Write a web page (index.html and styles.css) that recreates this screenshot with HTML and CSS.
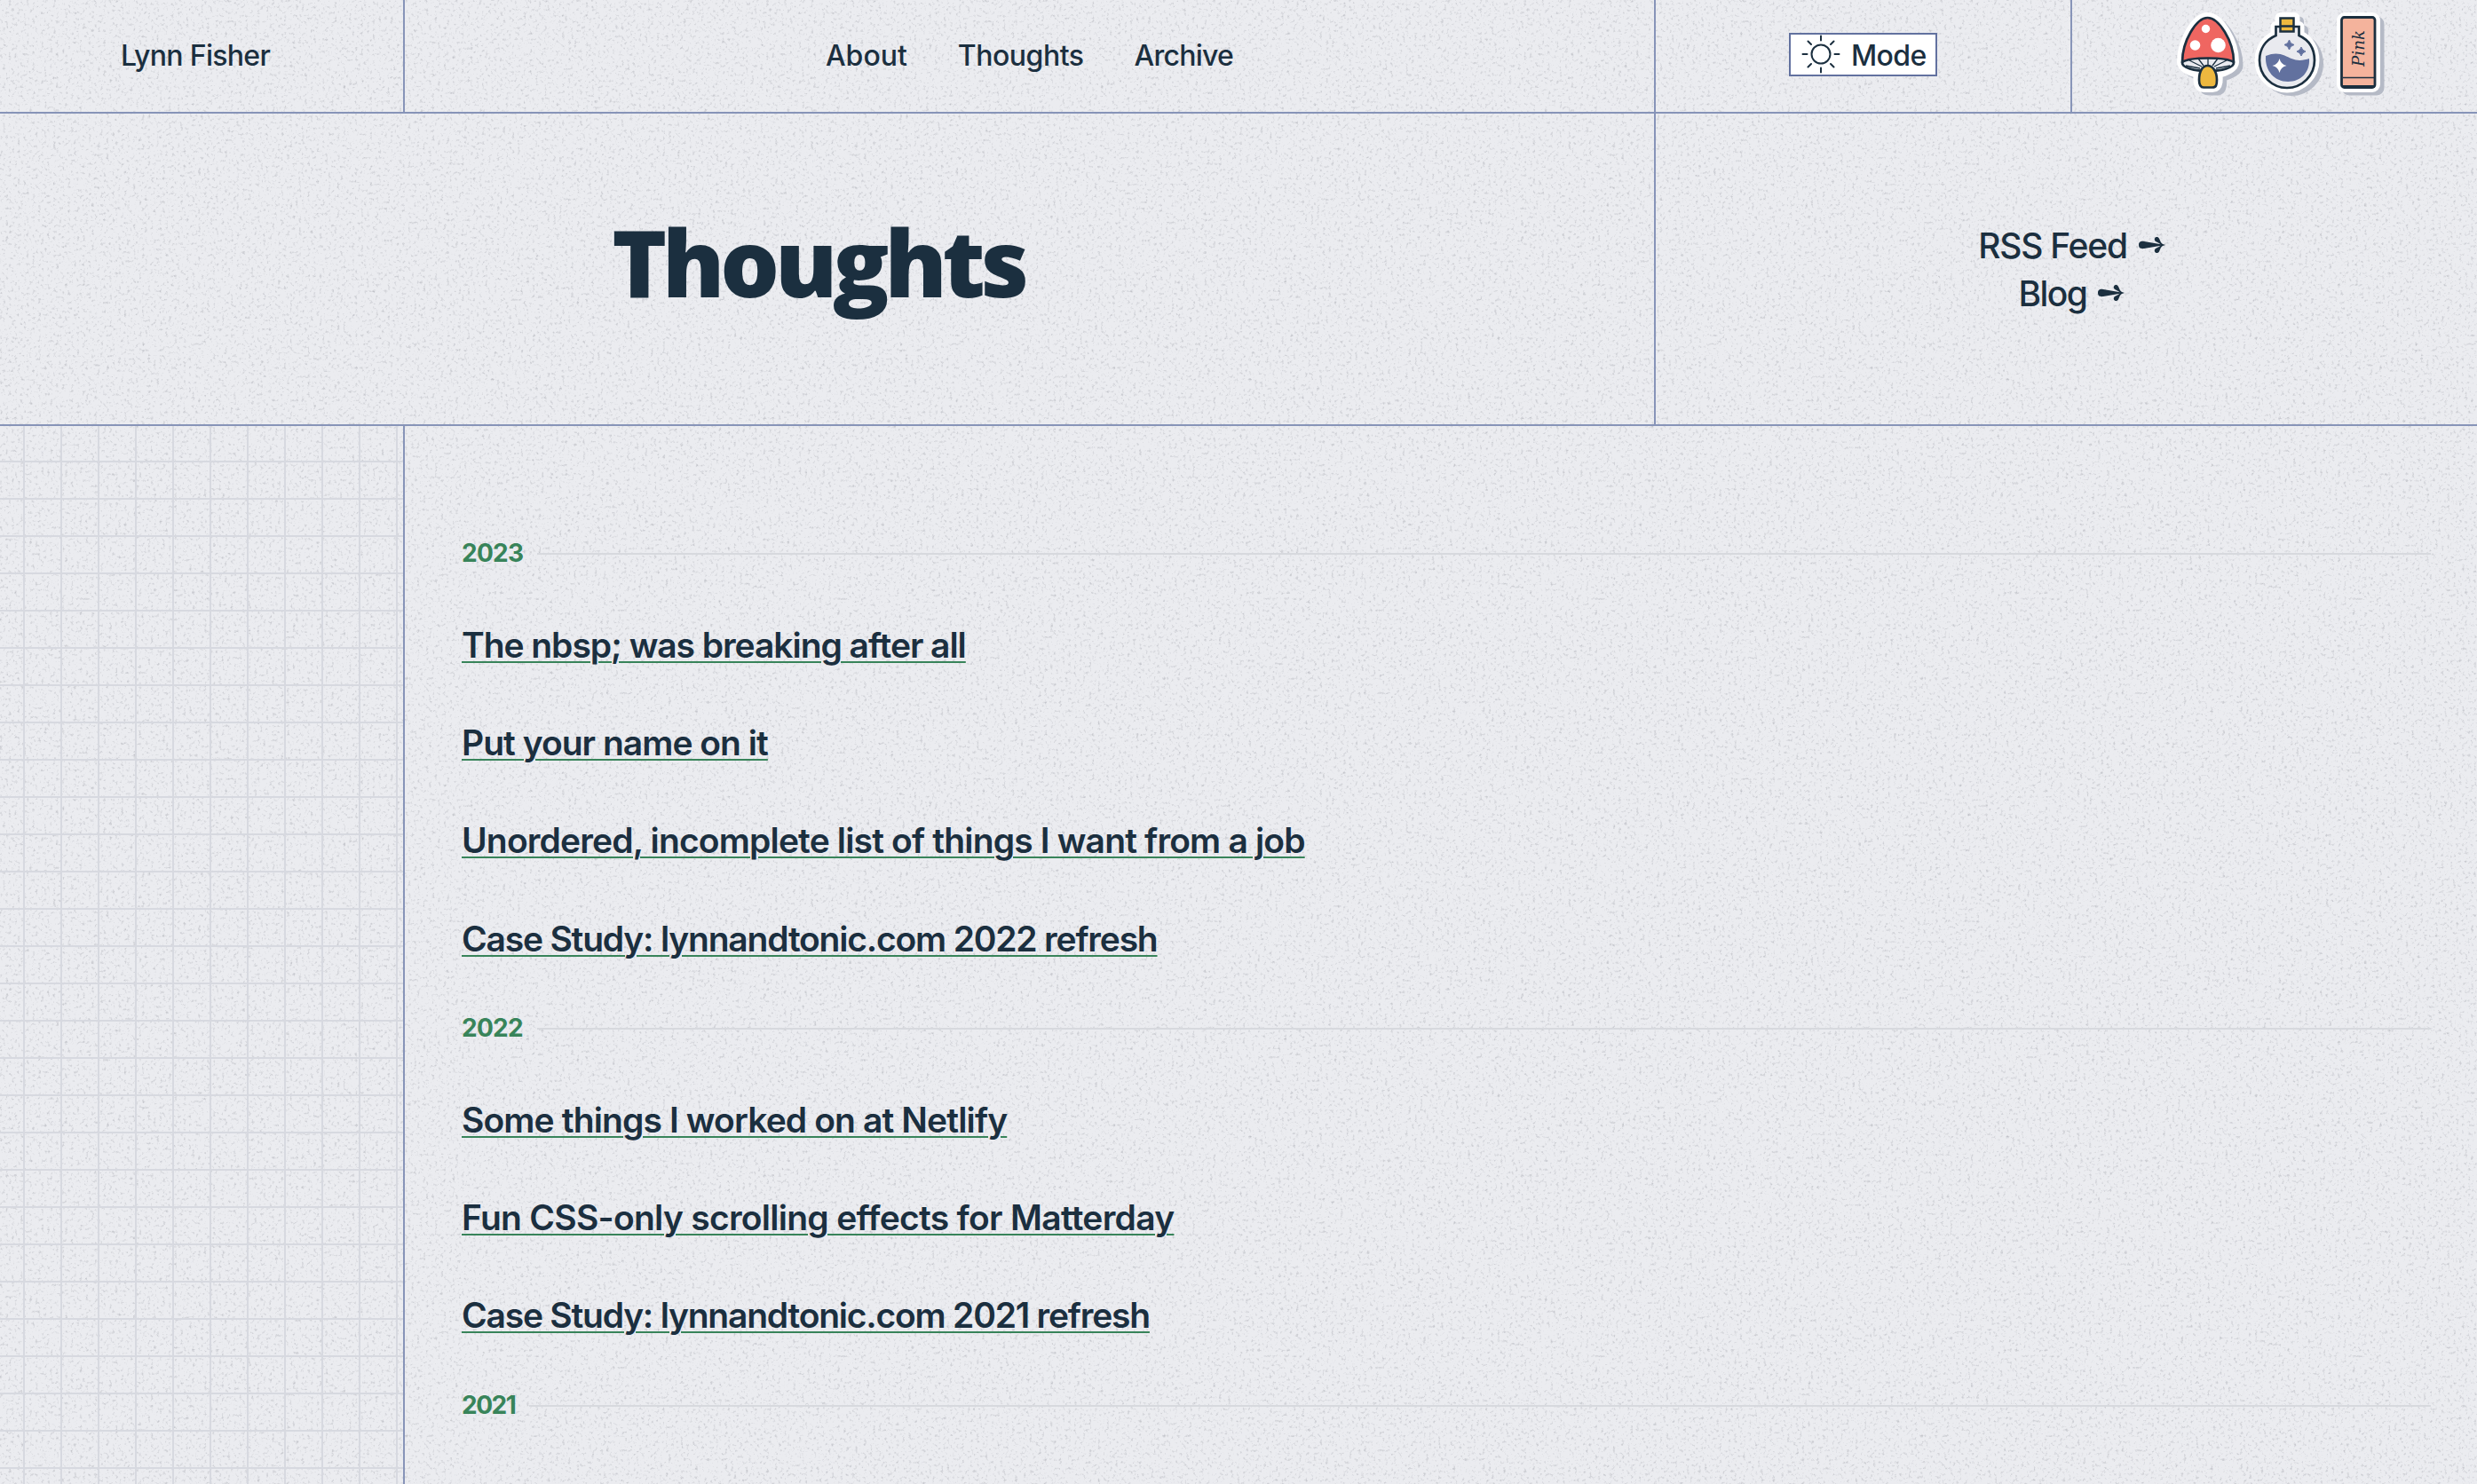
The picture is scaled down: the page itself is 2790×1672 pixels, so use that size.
FILE: index.html
```html
<!DOCTYPE html>
<html lang="en">
<head>
<meta charset="utf-8">
<title>Thoughts</title>
<link rel="stylesheet" href="styles.css">
</head>
<body>
<svg class="grain" aria-hidden="true">
  <filter id="grain" x="0" y="0" width="100%" height="100%" color-interpolation-filters="sRGB">
    <feTurbulence type="fractalNoise" baseFrequency="0.3" numOctaves="3" seed="4"/>
    <feColorMatrix values="0 0 0 0 0.45  0 0 0 0 0.46  0 0 0 0 0.5  0.9 0 0 0 -0.5"/>
  </filter>
  <rect width="100%" height="100%" filter="url(#grain)"/>
</svg>
<div class="page">
  <header class="top">
    <a class="cell brand"><span class="t t-brand">Lynn Fisher</span></a>
    <nav class="cell nav">
      <a class="t t-about">About</a><a class="t t-thoughts">Thoughts</a><a class="t t-archive">Archive</a>
    </nav>
    <div class="cell mode">
      <button class="mode-button">
        <svg class="sun" viewBox="0 0 44 44" fill="none" stroke="#1b2f3f" stroke-width="2" stroke-linecap="round"><circle cx="22" cy="22" r="10.500"/><path d="M22 1.500v5M22 37.500v5M1.500 22h5M37.500 22h5M7.500 7.500l3.500 3.500M33 33l3.500 3.500M36.500 7.500L33 11M11 33l-3.500 3.500"/></svg>
        <span class="t t-mode">Mode</span>
      </button>
    </div>
    <div class="cell stickers">
      <svg class="sticker-set" viewBox="0 0 260 116">
        <defs>
          <g id="mushroom"><path d="M46.500 20C34 20 18 46 18 70c0 5 8 10 19 12-1 6-2 16 6 16h9c7 0 6-10 5-16 11-2 19-7 19-12 0-24-17-50-29.500-50z"/></g>
          <path id="flask" d="M128.500 20h16v10h5v10c11 5 17 15 17 28a30.500 30.500 0 0 1-61 0c0-13 7-23 18-28V30h5z"/>
          <rect id="tube" x="198" y="20" width="37" height="78" rx="3"/>
        </defs>
        <g fill="#b5bac6" stroke="#b5bac6" stroke-width="11" stroke-linejoin="round" transform="translate(5 4)"><use href="#mushroom"/><use href="#flask"/><use href="#tube"/></g>
        <g fill="#fff" stroke="#fff" stroke-width="12" stroke-linejoin="round"><use href="#mushroom"/><use href="#flask"/><use href="#tube"/></g>
        <g stroke="#1b2f3f" stroke-width="2.700" stroke-linejoin="round">
          <ellipse cx="47" cy="71" rx="29" ry="9" fill="#e9eaef"/>
          <path d="M18 70C18 46 34 20 46.500 20S76 46 76 70C67 64 27 64 18 70z" fill="#ef6661"/>
          <path d="M47 65v8M36 66l6 8M58 66l-6 8M26 68l14 7M68 68l-14 7M22 74l16 3M72 74l-16 3" stroke-width="1.300" fill="none"/>
          <path d="M37 90c0-10 4-16 9.500-16S57 80 57 90c0 6-1 8.500-5 8.500H42c-4 0-5-3-5-8.500z" fill="#edb83f"/>
        </g>
        <g fill="#fff"><circle cx="44.500" cy="32.500" r="4.700"/><circle cx="32.500" cy="51" r="5.800"/><circle cx="58.500" cy="51" r="8.300"/></g>
        <g>
          <path d="M123.500 38v-8h26v10c11 5 17.500 15 17.500 28a31 31 0 0 1-62 0c0-13 7-23 18.500-28z" fill="#e9eaef" stroke="#1b2f3f" stroke-width="2.700"/>
          <path d="M112 63c14-6 22 0 29 3s14 2 20 0c1 15-9 26-24 26s-26-12-25-29z" fill="#62719f"/>
          <path d="M128.500 20.500h15v15h-15zM128.500 29.500h15" fill="#edb83f" stroke="#1b2f3f" stroke-width="2.500"/>
          <path d="M138.500 45q1 4.500 5.500 5.500-4.500 1-5.500 5.500-1-4.500-5.500-5.500 4.500-1 5.500-5.500zM152 53q1 4 5 5-4 1-5 5-1-4-5-5 4-1 5-5z" fill="#62719f" stroke="#62719f"/>
          <path d="M127.500 66q1.500 6.500 8 8-6.500 1.500-8 8-1.500-6.500-8-8 6.500-1.500 8-8z" fill="#fff"/>
        </g>
        <rect x="197.500" y="19.500" width="37.500" height="79" rx="3" fill="#f4b39c" stroke="#1b2f3f" stroke-width="2.800"/>
        <path d="M199 87.500h35" stroke="#1b2f3f" stroke-width="1.300"/>
        <path d="M198 97.500h37" stroke="#1b2f3f" stroke-width="3"/>
        <text class="pink" transform="translate(222.500 75) rotate(-90)" textLength="41" lengthAdjust="spacingAndGlyphs">Pink</text>
      </svg>
    </div>
  </header>
  <section class="banner">
    <div class="headline"><h1 class="t t-title">Thoughts</h1></div>
    <div class="feeds">
      <a class="feed"><span class="t t-rss">RSS Feed</span><svg class="arrow" viewBox="0 0 32 20"><use href="#arrow"/></svg></a>
      <a class="feed"><span class="t t-blog">Blog</span><svg class="arrow" viewBox="0 0 32 20"><g id="arrow" fill="#1b2f3f"><path d="M1 10C1 6 4 5.500 7 6l19 3.200L31 10l-5 .8L7 14c-3 .5-6 0-6-4z"/><path d="M31 10c-3-.5-5-2-6-5-.8-2.500-2-4.500-4-4-3 .5-3 4.500 0 5.500 2 .8 4 2 5 3.500-1 1.500-3 2.700-5 3.500-3 1-3 5 0 5.500 2 .5 3.200-1.500 4-4 1-3 3-4.500 6-5z"/></g></svg></a>
    </div>
  </section>
  <main class="body">
    <aside class="graph"></aside>
    <div class="posts">
      <h2 class="year"><span class="t t-y1">2023</span></h2>
      <a class="post"><span class="t t-p1">The nbsp; was breaking after all</span></a>
      <a class="post"><span class="t t-p2">Put your name on it</span></a>
      <a class="post"><span class="t t-p3">Unordered, incomplete list of things I want from a job</span></a>
      <a class="post"><span class="t t-p4">Case Study: lynnandtonic.com 2022 refresh</span></a>
      <h2 class="year"><span class="t t-y2">2022</span></h2>
      <a class="post"><span class="t t-p5">Some things I worked on at Netlify</span></a>
      <a class="post"><span class="t t-p6">Fun CSS-only scrolling effects for Matterday</span></a>
      <a class="post"><span class="t t-p7">Case Study: lynnandtonic.com 2021 refresh</span></a>
      <h2 class="year"><span class="t t-y3">2021</span></h2>
    </div>
  </main>
</div>
</body>
</html>
```
FILE: styles.css
```css
* { box-sizing: border-box; }
html, body { margin: 0; height: 100%; overflow: hidden; }
body {
  background: #ebecf0;
  color: #1b2f3f;
  font-family: Inter, "Liberation Sans", sans-serif;
  font-weight: 500;
}
.grain { position: absolute; inset: 0; width: 100%; height: 100%; z-index: -1; }
.page { display: flex; flex-direction: column; height: 100vh; }
.t { white-space: nowrap; }

.top {
  display: grid;
  grid-template-columns: 456px 1409px 469px 1fr;
  height: 128px;
  border-bottom: 2px solid #8794b8;
  font-size: 32px;
}
.cell { display: flex; align-items: center; justify-content: center; border-right: 2px solid #8794b8; }
.cell:last-child { border-right: 0; }
.brand { padding: 0 14px 1px 0; }
.t-brand { letter-spacing: -0.7px; }
.nav { gap: 57px; padding-bottom: 1px; }
.t-thoughts { letter-spacing: -0.5px; }
.t-archive { letter-spacing: -0.75px; }
.mode-button {
  display: flex;
  align-items: center;
  width: 167px;
  height: 49px;
  margin-top: -3px;
  padding: 0 10px 0 12px;
  gap: 12px;
  border: 2px solid #62719f;
  background: #fff;
  color: inherit;
  font: inherit;
}
.t-mode { letter-spacing: -0.6px; padding-top: 1px; }
.sun { width: 44px; height: 44px; flex: none; margin-top: -2px; }
.stickers { align-items: flex-start; justify-content: flex-start; padding-left: 106px; }
.sticker-set { width: 260px; height: 116px; }
.pink { font: italic 19px "DejaVu Serif", serif; fill: #1b2f3f; }

.banner {
  display: grid;
  grid-template-columns: 1865px 1fr;
  height: 352px;
  border-bottom: 2px solid #8794b8;
}
.headline {
  display: flex;
  align-items: center;
  justify-content: center;
  padding: 0 20px 16px 0;
  border-right: 2px solid #8794b8;
}
.t-title {
  margin: 0;
  font-family: "Open Sans", Inter, sans-serif;
  font-size: 105px;
  font-weight: 800;
  line-height: 120px;
  letter-spacing: -5.2px;
}
.feeds {
  display: flex;
  flex-direction: column;
  align-items: center;
  justify-content: center;
  padding-left: 13px;
  font-size: 39px;
}
.feed { display: flex; align-items: center; height: 54px; gap: 12px; }
.t-rss { letter-spacing: -1.25px; }
.t-blog { letter-spacing: -1.6px; }
.arrow { width: 32px; height: 20px; }

.body { display: grid; grid-template-columns: 456px 1fr; flex: 1; min-height: 0; }
.graph {
  border-right: 2px solid #8794b8;
  background:
    linear-gradient(#d7d9e0 2px, transparent 2px) 0 39px / 42px 42px,
    linear-gradient(90deg, #d7d9e0 2px, transparent 2px) 26px 0 / 42px 42px;
}
.posts { padding: 113px 52px 0 64px; overflow: hidden; }
.year {
  display: flex;
  align-items: center;
  gap: 16px;
  margin: 16px 0 16px;
  height: 62px;
  color: #38845a;
  font-size: 28px;
  font-weight: 700;
  letter-spacing: -0.7px;
}
.year:first-child { margin-top: 0; }
.year .t { padding-bottom: 2px; }
.t-y3 { letter-spacing: -1.5px; }
.year::after { content: ""; flex: 1; height: 2px; background: #d7d9de; }
.post { display: flex; align-items: center; height: 110.3px; font-size: 39px; font-weight: 600; }
.post .t { text-decoration: underline #38845a 2px; text-underline-offset: 4px; }
.t-p1 { letter-spacing: -1.05px; }
.t-p2 { letter-spacing: -0.98px; }
.t-p3 { letter-spacing: -0.84px; }
.t-p4 { letter-spacing: -1.2px; }
.t-p5 { letter-spacing: -0.88px; }
.t-p6 { letter-spacing: -0.73px; }
.t-p7 { letter-spacing: -1.22px; }
```
